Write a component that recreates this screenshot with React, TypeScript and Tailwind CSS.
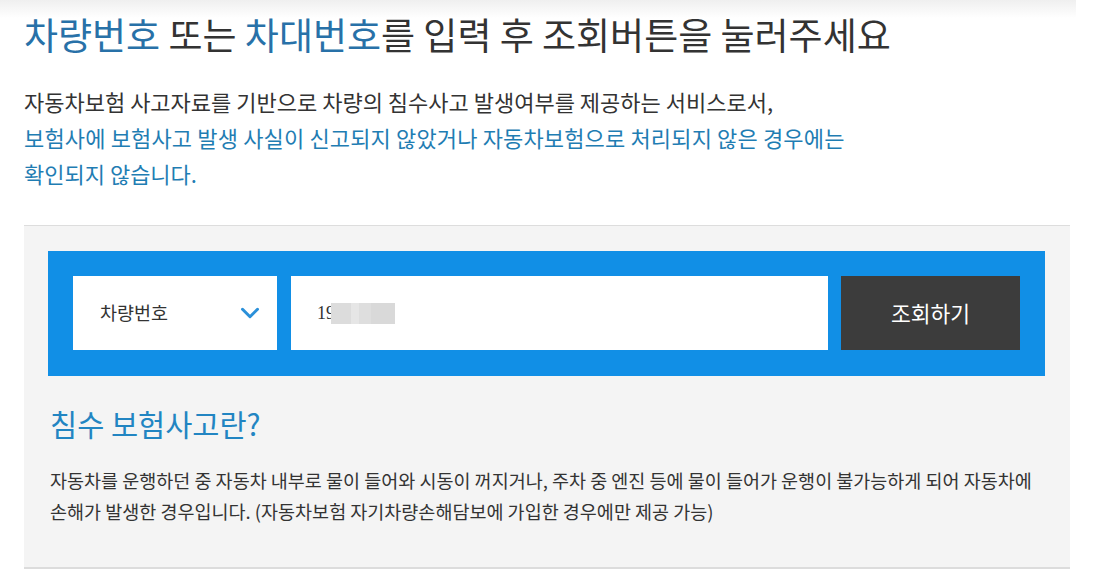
import React from 'react';
import { ChevronDown } from 'lucide-react';

const KR = { fontFamily: '"Noto Sans CJK KR", "Noto Sans", sans-serif' };

export default function App() {
  return (
    <div
      className="w-[1076px] pl-6 pt-[12px] bg-[linear-gradient(to_bottom,#efefef_0px,#ffffff_18px)]"
      style={KR}
    >
      {/* title */}
      <h1 className="text-[37px] leading-[44px] font-normal text-[#333] whitespace-nowrap">
        <span className="text-[#2871a8]">차량번호</span> 또는{' '}
        <span className="text-[#2871a8]">차대번호</span>를 입력 후 조회버튼을 눌러주세요
      </h1>

      <div className="mt-[27px] text-[22px] leading-[36px] whitespace-nowrap">
        <p className="text-[#333]">자동차보험 사고자료를 기반으로 차량의 침수사고 발생여부를 제공하는 서비스로서,</p>
        <p className="text-[#1f7db3] tracking-[0.15px]">보험사에 보험사고 발생 사실이 신고되지 않았거나 자동차보험으로 처리되지 않은 경우에는</p>
        <p className="text-[#1f7db3]">확인되지 않습니다.</p>
      </div>

      {/* search panel */}
      <section className="mt-[34px] w-[1046px] bg-[#f4f4f4] border-t border-[#dddddd] border-b-2 border-b-[#dcdcdc] pt-[25px] pl-6 pr-[25px] pb-[40px]">
        <div className="flex items-stretch bg-[#118fe6] pt-[25px] pb-[26px] pl-[25px] pr-[25px] h-[125px]">
          <div className="w-[204px] bg-white flex items-center justify-between pl-[27px] pr-[12px]">
            <span className="text-[18.5px] text-[#333]">차량번호</span>
            <ChevronDown size={30} strokeWidth={2.4} className="text-[#2b90d9]" />
          </div>
          <div className="ml-[14px] w-[537px] bg-white flex items-center pl-[26px]">
            <span
              className="text-[18px] text-[#333]"
              style={{ fontFamily: '"Liberation Serif", serif' }}
            >
              19
            </span>
            {/* blurred digits */}
            <div className="-ml-[4px] flex h-[21px]">
              <div className="w-[20px] bg-[#dcdcdc]" />
              <div className="w-[8px] bg-[#e6e6e6]" />
              <div className="w-[12px] bg-[#dedede]" />
              <div className="w-[24px] bg-[#d9d9d9]" />
            </div>
          </div>
          <button className="ml-[13px] w-[179px] bg-[#3c3c3c] text-white text-[21.5px] flex items-center justify-center">
            조회하기
          </button>
        </div>

        <h2 className="mt-[29px] pl-[2px] text-[29.5px] leading-[36px] font-normal text-[#2285c2]">
          침수 보험사고란?
        </h2>
        <p className="mt-[24px] pl-[2px] text-[18.5px] leading-[31px] text-[#333] whitespace-nowrap">
          자동차를 운행하던 중 자동차 내부로 물이 들어와 시동이 꺼지거나, 주차 중 엔진 등에 물이 들어가 운행이 불가능하게 되어 자동차에
          <br />
          손해가 발생한 경우입니다. (자동차보험 자기차량손해담보에 가입한 경우에만 제공 가능)
        </p>
      </section>
    </div>
  );
}
